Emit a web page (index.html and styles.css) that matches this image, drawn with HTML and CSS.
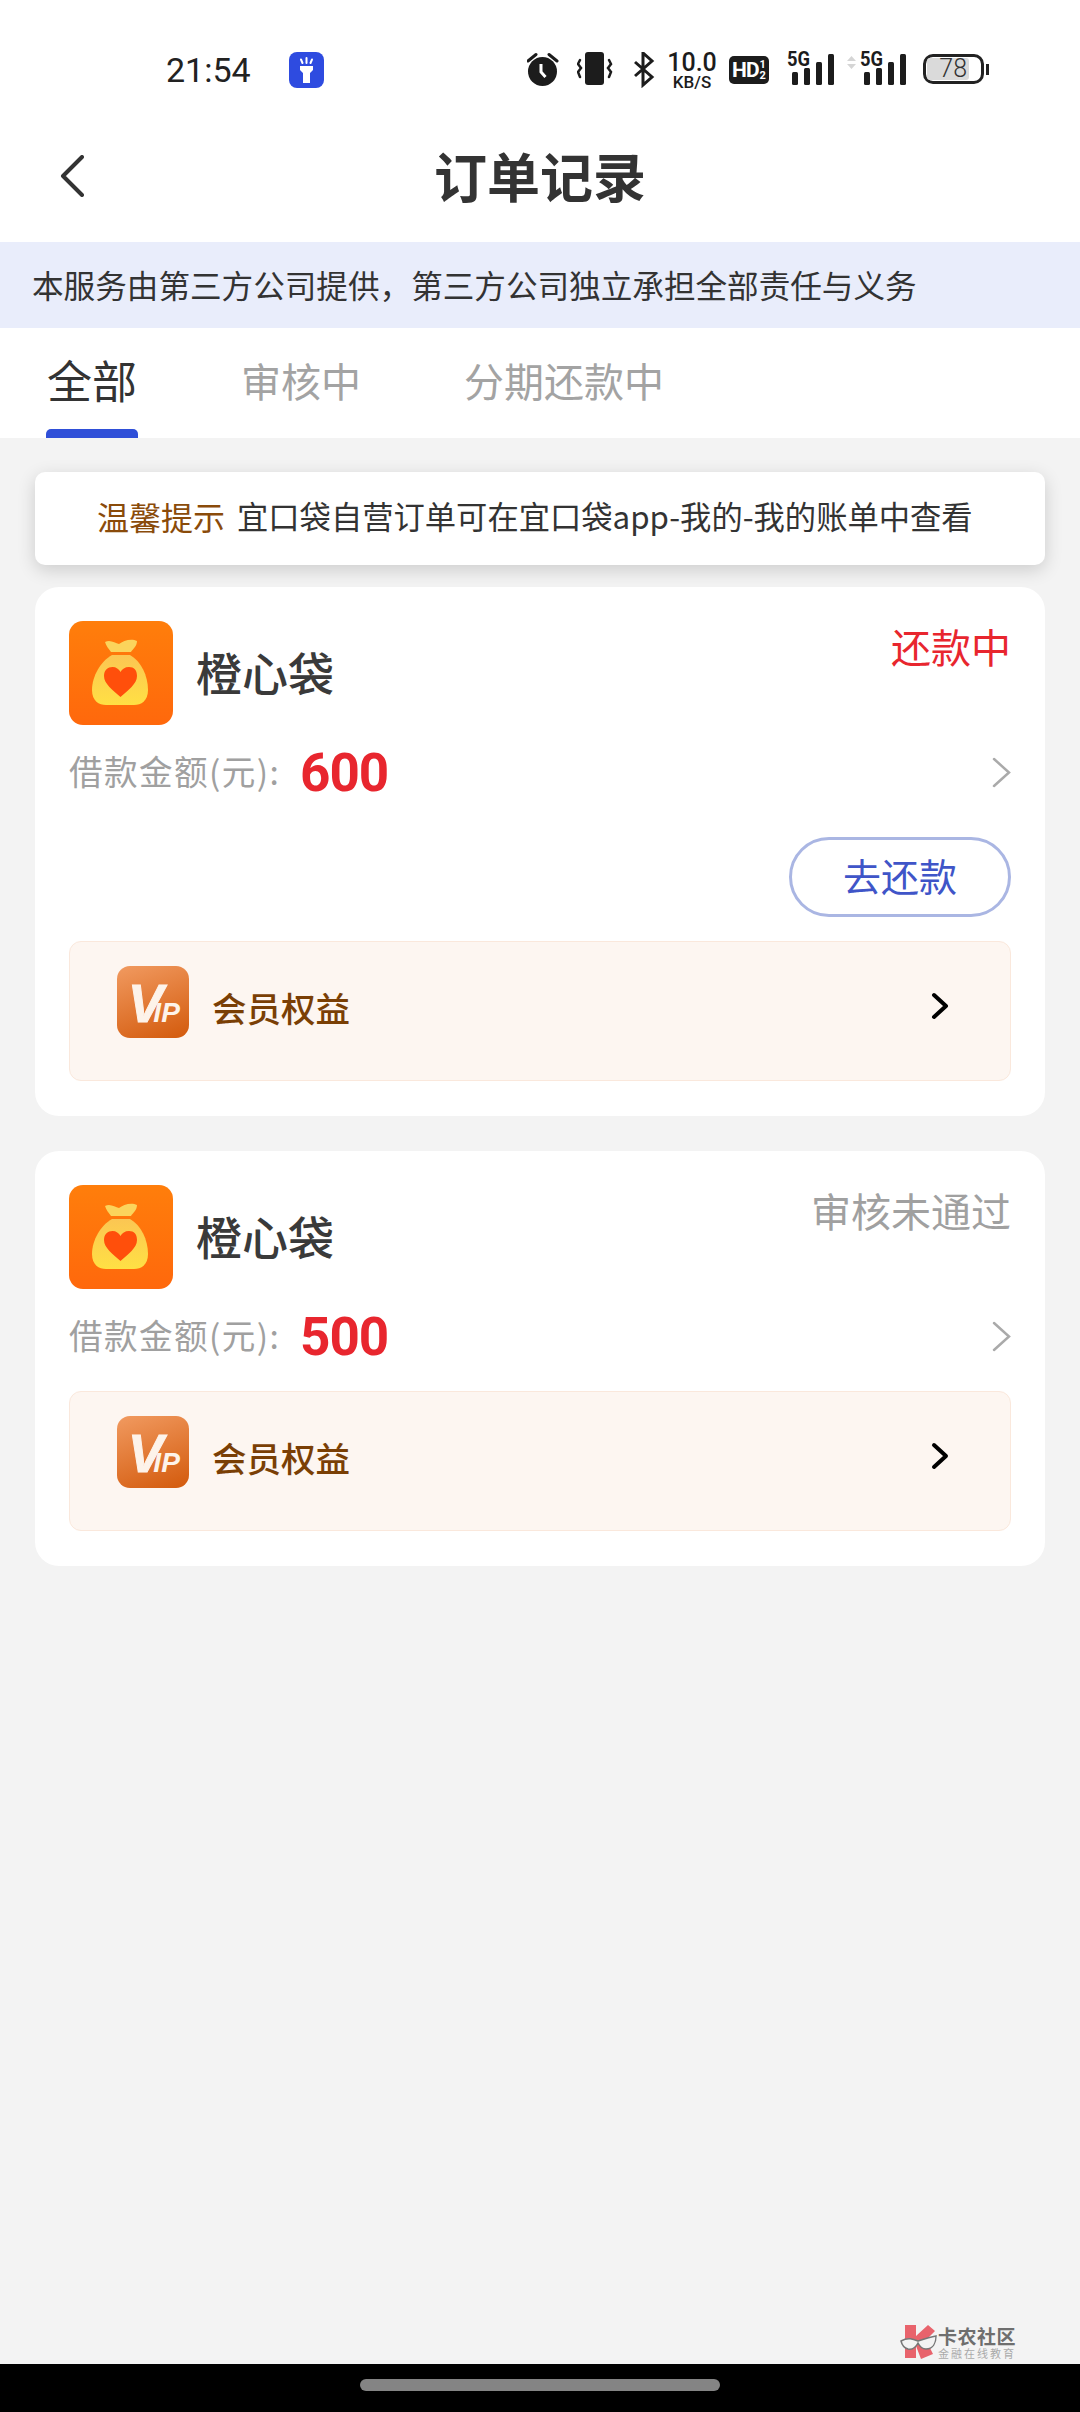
FILE: index.html
```html
<!DOCTYPE html>
<html lang="zh-CN">
<head>
    <meta charset="UTF-8">
    <meta name="viewport" content="width=device-width, initial-scale=1.0">
    <title>订单记录</title>
    <link rel="stylesheet" href="styles.css">
</head>
<body>

<svg class="svg-defs" aria-hidden="true">
    <defs>
        <linearGradient id="bagBg" x1="0" y1="0" x2="0" y2="1">
            <stop offset="0" stop-color="#ff7e0b"/>
            <stop offset="1" stop-color="#ff680c"/>
        </linearGradient>
        <linearGradient id="bagBody" x1="0" y1="0" x2="0" y2="1">
            <stop offset="0" stop-color="#fbc653"/>
            <stop offset="1" stop-color="#ffe044"/>
        </linearGradient>
        <symbol id="bag" viewBox="0 0 104 104">
            <rect width="104" height="104" rx="14" fill="url(#bagBg)"/>
            <path d="M36 21C41 18 46 22 50 23C54 20 62 17 68 20C68 25 64 28 62 31H42C40 28 37 25 36 21Z" fill="#fbd45c"/>
            <path d="M43 34H61C72 40 79 55 79 69C79 80 72 84 65 84H37C30 84 23 80 23 69C23 55 32 40 43 34Z" fill="url(#bagBody)"/>
            <path d="M51.5 76C44 69 35 63 35 55C35 49 39 46 43.5 46C47 46 50 48 51.5 51C53 48 56 46 60 46C65 46 68 49 68 55C68 63 59 69 51.5 76Z" fill="#ff4f0b"/>
        </symbol>
    </defs>
</svg>

<div class="status-bar">
    <span class="time">21:54</span>
    <span class="flash">
        <svg width="35" height="36" viewBox="0 0 35 36">
            <path d="M11 14H24V18L21 21V31H14V21L11 18Z" fill="#fff"/>
            <path d="M17.500 6V11M12 7.500L13.500 11M23 7.500L21.500 11" stroke="#fff" stroke-width="2" stroke-linecap="round"/>
        </svg>
    </span>
    <div class="status-icons">
        <svg width="37" height="36" viewBox="0 0 37 36">
            <circle cx="15.500" cy="19.500" r="14.500" fill="#1c1c1c"/>
            <path d="M1 9L9 2.500M30 9L22 2.500" stroke="#1c1c1c" stroke-width="3" stroke-linecap="round"/>
            <path d="M14 12V20L18.500 25" stroke="#fff" stroke-width="3" fill="none"/>
        </svg>
        <svg width="43" height="36" viewBox="0 0 43 36">
            <rect x="8" y="0" width="19" height="33" rx="3" fill="#1c1c1c"/>
            <path d="M3 8L1 12L4 16L1 20L3 25M32 8L34 12L31 16L34 20L32 25" fill="none" stroke="#1c1c1c" stroke-width="2.500" stroke-linecap="round"/>
        </svg>
        <svg width="22" height="36" viewBox="0 0 22 36">
            <path d="M2 10L19 25L10 33V1L19 9L2 24" fill="none" stroke="#1c1c1c" stroke-width="3"/>
        </svg>
        <div class="speed">
            <span class="speed-num">10.0</span>
            <span class="speed-unit">KB/S</span>
        </div>
        <div class="hd">
            <span>HD</span>
            <span class="hd-nums"><i>1</i><i>2</i></span>
        </div>
        <svg class="sig" width="52" height="46" viewBox="0 -10 52 46">
            <text x="5" y="14" textLength="23" lengthAdjust="spacingAndGlyphs">5G</text>
            <rect x="10" y="20" width="6" height="13" rx="1.500"/>
            <rect x="22" y="16" width="6" height="17" rx="1.500"/>
            <rect x="34" y="10" width="6" height="23" rx="1.500"/>
            <rect x="46" y="2" width="6" height="31" rx="1.500"/>
        </svg>
        <svg class="sig" width="60" height="46" viewBox="0 -10 60 46">
            <path d="M0 9L4.500 4L9 9ZM0 12L4.500 17L9 12Z" fill="#d5d5d5"/>
            <text x="13" y="14" textLength="23" lengthAdjust="spacingAndGlyphs">5G</text>
            <rect x="17" y="20" width="6" height="13" rx="1.500"/>
            <rect x="29" y="16" width="6" height="17" rx="1.500"/>
            <rect x="41" y="10" width="6" height="23" rx="1.500"/>
            <rect x="53" y="2" width="6" height="31" rx="1.500"/>
        </svg>
        <div class="battery">
            <div class="battery-body"><span class="battery-fill">78</span></div>
            <span class="battery-nub"></span>
        </div>
    </div>
</div>

<header class="top-bar">
    <svg class="back" width="24" height="42" viewBox="0 0 24 42">
        <path d="M22 2L3 21L22 40" fill="none" stroke="#333" stroke-width="4" stroke-linecap="round" stroke-linejoin="round"/>
    </svg>
    <h1>订单记录</h1>
    <span></span>
</header>

<div class="banner">本服务由第三方公司提供，第三方公司独立承担全部责任与义务</div>

<nav class="tabs">
    <div class="tab active">全部<span class="tab-line"></span></div>
    <div class="tab">审核中</div>
    <div class="tab">分期还款中</div>
</nav>

<main class="content">
    <div class="notice">
        <span class="notice-tag">温馨提示</span>
        <span class="notice-text">宜口袋自营订单可在宜口袋app-我的-我的账单中查看</span>
    </div>

    <section class="card">
        <div class="card-head">
            <svg class="bag-icon"><use href="#bag"/></svg>
            <span class="name">橙心袋</span>
            <span class="state state-red">还款中</span>
        </div>
        <div class="amount-row">
            <span class="amount-label">借款金额(元):</span>
            <span class="amount">600</span>
            <svg class="arrow" width="19" height="31" viewBox="0 0 19 31">
                <path d="M2 2L17 15.500L2 29" fill="none" stroke="#aaa" stroke-width="2.500" stroke-linecap="round"/>
            </svg>
        </div>
        <div class="actions"><button class="pay-btn">去还款</button></div>
        <div class="vip">
            <div class="vip-icon"><span class="vip-v">V</span><span class="vip-ip">IP</span></div>
            <span class="vip-text">会员权益</span>
            <svg class="vip-arrow" width="18" height="28" viewBox="0 0 18 28">
                <path d="M3 3L15 14L3 25" fill="none" stroke="#000" stroke-width="4" stroke-linecap="round" stroke-linejoin="round"/>
            </svg>
        </div>
    </section>

    <section class="card">
        <div class="card-head">
            <svg class="bag-icon"><use href="#bag"/></svg>
            <span class="name">橙心袋</span>
            <span class="state">审核未通过</span>
        </div>
        <div class="amount-row">
            <span class="amount-label">借款金额(元):</span>
            <span class="amount">500</span>
            <svg class="arrow" width="19" height="31" viewBox="0 0 19 31">
                <path d="M2 2L17 15.500L2 29" fill="none" stroke="#aaa" stroke-width="2.500" stroke-linecap="round"/>
            </svg>
        </div>
        <div class="vip">
            <div class="vip-icon"><span class="vip-v">V</span><span class="vip-ip">IP</span></div>
            <span class="vip-text">会员权益</span>
            <svg class="vip-arrow" width="18" height="28" viewBox="0 0 18 28">
                <path d="M3 3L15 14L3 25" fill="none" stroke="#000" stroke-width="4" stroke-linecap="round" stroke-linejoin="round"/>
            </svg>
        </div>
    </section>

    <div class="watermark">
        <svg width="38" height="36" viewBox="0 0 38 36">
            <path d="M5 1H16V12L28 1L35 7L26 16L33 30L21 35L16 22V34H5Z" fill="#e8636c"/>
            <path d="M1 17C8 13 13 15 18 17C24 15 30 13 36 12C36 19 33 25 26 25C21 25 19 21 18 19C16 23 13 26 8 25C4 24 2 21 1 17Z" fill="#f3f3f3" stroke="#777" stroke-width="1.500"/>
        </svg>
        <div class="wm-text">
            <span class="wm-title">卡农社区</span>
            <span class="wm-sub">金融在线教育</span>
        </div>
    </div>
</main>

<div class="nav-bar"><span class="nav-pill"></span></div>

</body>
</html>
```

FILE: styles.css
```css
* {
    box-sizing: border-box;
}
body {
    margin: 0;
    width: 1080px;
    height: 2412px;
    display: flex;
    flex-direction: column;
    background: #fff;
    font-family: "Noto Sans CJK SC", "Noto Sans", sans-serif;
    color: #333;
    overflow: hidden;
}
.svg-defs {
    position: absolute;
    width: 0;
    height: 0;
}

/* barra de status */
.status-bar {
    height: 108px;
    padding: 52px 0 0 166px;
    display: flex;
    align-items: flex-start;
}
.time {
    width: 85px;
    height: 36px;
    font-family: Roboto, sans-serif;
    font-size: 34px;
    line-height: 36px;
    color: #222;
}
.flash {
    width: 35px;
    height: 36px;
    margin-left: 38px;
    background: #2e4be0;
    border-radius: 8px;
}
.flash svg {
    display: block;
}
.status-icons {
    margin-left: 203px;
    display: flex;
    align-items: flex-start;
    gap: 13px;
}
.speed {
    width: 48px;
    display: flex;
    flex-direction: column;
    align-items: center;
    font-family: Roboto, sans-serif;
    font-weight: 500;
    color: #1c1c1c;
}
.speed-num {
    font-size: 25px;
    line-height: 22px;
}
.speed-unit {
    font-size: 17px;
    line-height: 16px;
}
.hd {
    width: 40px;
    height: 28px;
    margin-top: 4px;
    display: flex;
    align-items: center;
    justify-content: center;
    gap: 1px;
    background: #1c1c1c;
    border-radius: 5px;
    color: #fff;
    font-family: Roboto, sans-serif;
    font-weight: 700;
    font-size: 21px;
    letter-spacing: -1px;
}
.hd-nums {
    display: flex;
    flex-direction: column;
    font-size: 11px;
    line-height: 11px;
    letter-spacing: 0;
}
.hd-nums i {
    font-style: normal;
}
.sig {
    margin-top: -10px;
}
.sig text {
    font-family: Roboto, sans-serif;
    font-weight: 700;
    font-size: 20px;
    fill: #1c1c1c;
}
.sig rect {
    fill: #1c1c1c;
}
.battery {
    margin: 2px 0 0 3px;
    display: flex;
    align-items: center;
    gap: 2px;
}
.battery-body {
    width: 61px;
    height: 30px;
    padding: 1px;
    border: 3px solid #222;
    border-radius: 10px;
}
.battery-fill {
    display: block;
    width: 42px;
    height: 22px;
    padding-right: 2px;
    background: #dadada;
    border-radius: 3px;
    text-align: right;
    font-family: Roboto, sans-serif;
    font-weight: 300;
    font-size: 25px;
    line-height: 22px;
}
.battery-nub {
    width: 3px;
    height: 11px;
    background: #222;
}

/* cabecalho */
.top-bar {
    height: 134px;
    display: grid;
    grid-template-columns: 1fr auto 1fr;
    align-items: center;
}
.back {
    margin: 2px 0 0 60px;
}
.top-bar h1 {
    margin: 0;
    font-size: 53px;
    line-height: 70px;
    font-weight: 700;
    color: #333;
}
.banner {
    height: 86px;
    padding-left: 32px;
    background: #e9edfb;
    font-size: 31.6px;
    line-height: 84px;
    color: #333;
}

/* abas */
.tabs {
    height: 110px;
    padding-left: 46px;
    display: flex;
    gap: 103px;
}
.tab {
    padding-top: 22px;
    font-size: 40px;
    line-height: 60px;
    color: #a3a3a3;
}
.tab.active {
    width: 92px;
    font-size: 45px;
    color: #333;
    text-align: center;
}
.tab-line {
    display: block;
    height: 9px;
    margin-top: 19px;
    background: #2f4fd8;
    border-radius: 5px 5px 0 0;
}

/* conteudo */
.content {
    position: relative;
    flex: 1;
    padding: 34px 35px 0;
    background: #f3f3f3;
}
.notice {
    height: 93px;
    margin-bottom: 22px;
    padding: 0 0 6px 62px;
    display: flex;
    align-items: center;
    gap: 12px;
    background: #fff;
    border-radius: 10px;
    box-shadow: 0 5px 18px rgba(0, 0, 0, 0.16);
    font-size: 32px;
}
.notice-tag {
    color: #8a4b0a;
}
.notice-text {
    font-size: 31.3px;
}
.card {
    margin-bottom: 35px;
    padding: 34px 34px 35px;
    background: #fff;
    border-radius: 24px;
}
.card-head {
    display: flex;
    align-items: flex-start;
}
.bag-icon {
    width: 104px;
    height: 104px;
    flex: none;
}
.name {
    margin: 20px 0 0 23px;
    font-size: 46px;
    line-height: 60px;
    font-weight: 500;
    color: #3a3a3a;
}
.state {
    margin-left: auto;
    font-size: 40px;
    line-height: 50px;
    color: #a0a0a0;
}
.state-red {
    color: #e8262e;
}
.amount-row {
    height: 64px;
    margin-top: 16px;
    display: flex;
    align-items: center;
}
.amount-label {
    width: 231px;
    padding-bottom: 5px;
    font-size: 33.6px;
    letter-spacing: 1.4px;
    color: #a0a0a0;
}
.amount {
    font-family: Roboto, sans-serif;
    font-size: 53px;
    font-weight: 700;
    letter-spacing: -1px;
    color: #e8262e;
}
.arrow {
    margin: 0 0 2px auto;
}
.actions {
    margin: 32px 0 24px;
    display: flex;
    justify-content: flex-end;
}
.pay-btn {
    width: 222px;
    height: 80px;
    padding: 0 0 5px;
    background: #fff;
    border: 3px solid #aab6e3;
    border-radius: 40px;
    font-family: inherit;
    font-size: 38px;
    color: #3f55c8;
}
.vip {
    height: 140px;
    margin-top: 22px;
    padding: 24px 61px 0 47px;
    display: flex;
    align-items: flex-start;
    background: #fdf6f1;
    border: 1px solid #fae8dc;
    border-radius: 12px;
}
.vip-icon {
    width: 72px;
    height: 72px;
    padding: 11px 0 0 11px;
    display: flex;
    align-items: baseline;
    overflow: hidden;
    background: linear-gradient(160deg, #f19a60, #d35a0c);
    border-radius: 13px;
    color: #fdf3ea;
    font-family: "Liberation Sans", sans-serif;
    font-style: italic;
    font-weight: 700;
    line-height: 1;
}
.vip-v {
    font-size: 53px;
    letter-spacing: -10px;
    -webkit-text-stroke: 1px #fdf3ea;
}
.vip-ip {
    font-size: 28px;
}
.vip-text {
    margin: 17px 0 0 23px;
    font-size: 34.5px;
    line-height: 48px;
    font-weight: 500;
    color: #7a3f05;
}
.vip-arrow {
    margin: 26px 0 0 auto;
}

/* marca d'agua */
.watermark {
    position: absolute;
    left: 900px;
    bottom: 4px;
    display: flex;
    align-items: center;
}
.wm-text {
    display: flex;
    flex-direction: column;
}
.wm-title {
    font-size: 19px;
    line-height: 21px;
    font-weight: 700;
    color: #6e6e6e;
    letter-spacing: 0.500px;
}
.wm-sub {
    font-size: 11px;
    line-height: 14px;
    color: #aaa;
    letter-spacing: 2px;
}

/* barra de navegacao */
.nav-bar {
    height: 48px;
    padding-top: 15px;
    display: flex;
    justify-content: center;
    align-items: flex-start;
    background: #000;
}
.nav-pill {
    width: 360px;
    height: 12px;
    background: #848484;
    border-radius: 6px;
}
```
